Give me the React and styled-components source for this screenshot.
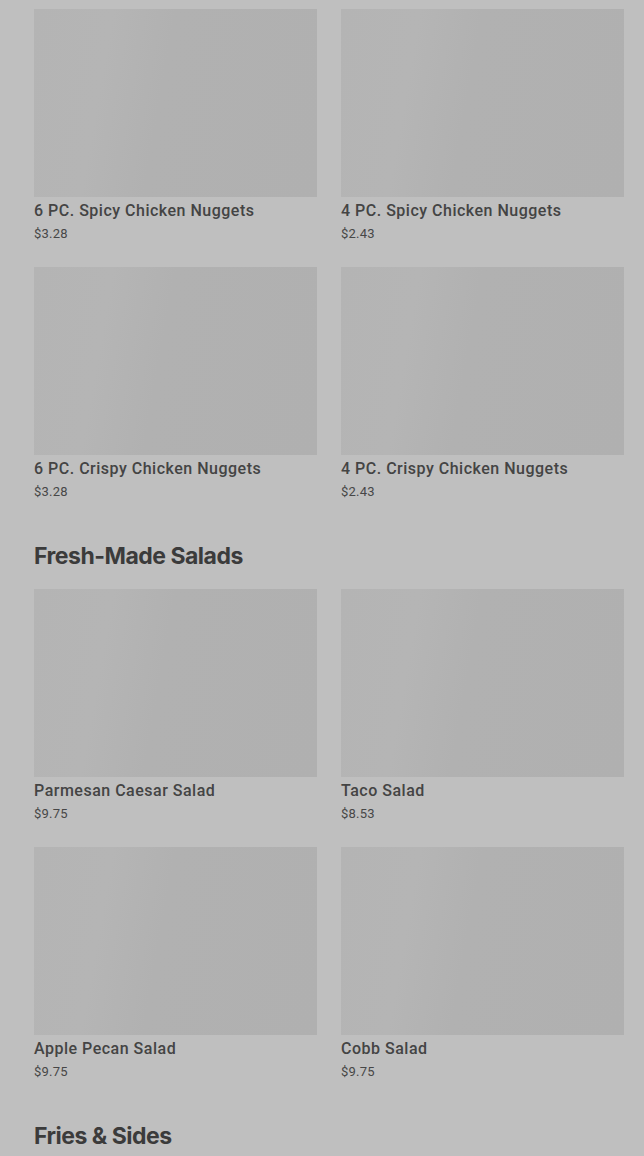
import styled, { createGlobalStyle } from "styled-components";

const GlobalStyle = createGlobalStyle`
  html, body {
    margin: 0;
    padding: 0;
    background: #bfbfbf;
  }
  body {
    font-family: Inter, "Liberation Sans", sans-serif;
    color: #3d3d3d;
  }
`;

const Page = styled.div`
  padding: 9px 20px 0 34px;
  height: 1156px;
  overflow: hidden;
  box-sizing: border-box;
`;

const Section = styled.section`
  margin-bottom: 42px;
`;

const Heading = styled.h2`
  margin: 0 0 18px;
  font-family: Inter, "Liberation Sans", sans-serif;
  font-size: 23px;
  line-height: 30px;
  font-weight: 700;
  letter-spacing: -0.5px;
  color: #3b3b3b;
`;

const Grid = styled.div`
  display: grid;
  grid-template-columns: 283px 283px;
  column-gap: 24px;
  row-gap: 26px;
`;

const Card = styled.div`
  display: flex;
  flex-direction: column;
`;

const Thumb = styled.div`
  height: 188px;
  background: linear-gradient(
    100deg,
    #b4b4b4 0%,
    #b5b5b5 25%,
    #b1b1b1 45%,
    #b0b0b0 100%
  );
`;

const Name = styled.div`
  margin-top: 4px;
  font-family: Roboto, Inter, sans-serif;
  font-size: 16px;
  line-height: 20px;
  font-weight: 500;
  letter-spacing: 0.5px;
  color: #444;
`;

const Price = styled.div`
  margin-top: 6px;
  font-family: Roboto, sans-serif;
  font-size: 13px;
  line-height: 14px;
  font-weight: 400;
  letter-spacing: 0.2px;
  color: #474747;
`;

const sections = [
  {
    title: null,
    items: [
      ["6 PC. Spicy Chicken Nuggets", "$3.28"],
      ["4 PC. Spicy Chicken Nuggets", "$2.43"],
      ["6 PC. Crispy Chicken Nuggets", "$3.28"],
      ["4 PC. Crispy Chicken Nuggets", "$2.43"],
    ],
  },
  {
    title: "Fresh-Made Salads",
    items: [
      ["Parmesan Caesar Salad", "$9.75"],
      ["Taco Salad", "$8.53"],
      ["Apple Pecan Salad", "$9.75"],
      ["Cobb Salad", "$9.75"],
    ],
  },
  { title: "Fries & Sides", items: [] },
];

function MenuCard({ name, price }) {
  return (
    <Card>
      <Thumb />
      <Name>{name}</Name>
      <Price>{price}</Price>
    </Card>
  );
}

export default function App() {
  return (
    <>
      <GlobalStyle />
      <Page>
        {sections.map((s, i) => (
          <Section key={i}>
            {s.title && <Heading>{s.title}</Heading>}
            {s.items.length > 0 && (
              <Grid>
                {s.items.map(([name, price]) => (
                  <MenuCard key={name} name={name} price={price} />
                ))}
              </Grid>
            )}
          </Section>
        ))}
      </Page>
    </>
  );
}
